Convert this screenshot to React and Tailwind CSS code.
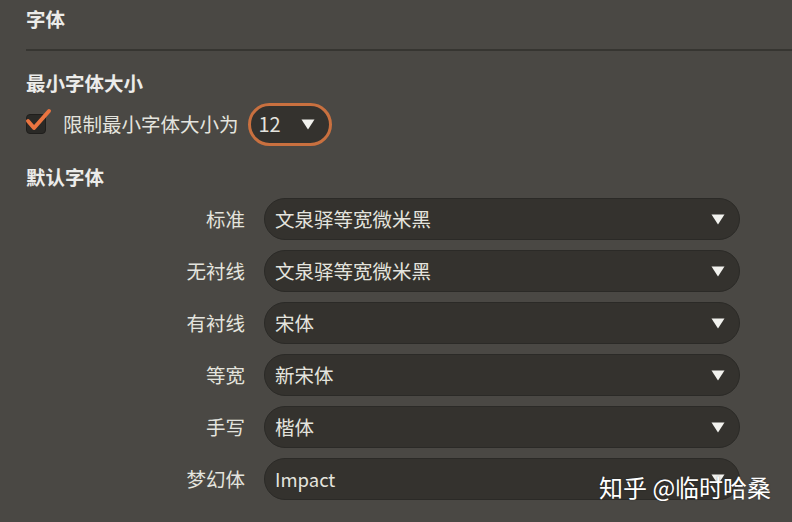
import React from "react";

const rows = [
  ["标准", "文泉驿等宽微米黑"],
  ["无衬线", "文泉驿等宽微米黑"],
  ["有衬线", "宋体"],
  ["等宽", "新宋体"],
  ["手写", "楷体"],
  ["梦幻体", "Impact"],
];

function Arrow() {
  return (
    <svg width="14" height="11" viewBox="0 0 14 11" className="shrink-0">
      <path d="M0.5 0.5 L13.5 0.5 L7 10.5 Z" fill="#f2f2ee" />
    </svg>
  );
}

export default function App() {
  const font = { fontFamily: '"Noto Sans CJK SC", "Noto Sans", sans-serif' };
  return (
    <div
      className="relative w-[792px] h-[522px] overflow-hidden bg-[#4a4844] text-[#e4e4de]"
      style={font}
    >
      <div className="pl-[26px] pt-[7px] text-[19.5px] leading-[24px] font-bold text-[#ececea]">字体</div>
      <div className="ml-[26px] mt-[18px] h-[2px] bg-[#363531]" />
      <div className="pl-[26px] mt-[20px] text-[19.5px] leading-[24px] font-bold text-[#ececea]">最小字体大小</div>
      <div className="pl-[26px] mt-[8px] h-[42px] flex items-center">
        <div className="relative w-[20px] h-[20px] rounded-[4px] bg-[#2a2926] border border-[#1f1e1c]">
          <svg width="28" height="26" viewBox="0 0 28 26" className="absolute left-[-2px] top-[-8px]">
            <path d="M3 14 L9 21 L24 4" fill="none" stroke="#ea7440" strokeWidth="4" strokeLinecap="round" strokeLinejoin="round" />
          </svg>
        </div>
        <span className="ml-[17px] text-[19.5px] leading-[24px]">限制最小字体大小为</span>
        <div className="ml-[9px] w-[84px] h-[43px] rounded-full border-[3px] border-[#c9703f] bg-[#34322e] flex items-center pl-[8px] pr-[14px] justify-between">
          <span className="text-[20px] leading-[24px]">12</span>
          <Arrow />
        </div>
      </div>
      <div className="pl-[26px] mt-[20px] text-[19.5px] leading-[24px] font-bold text-[#ececea]">默认字体</div>
      <div className="mt-[9px] flex flex-col gap-[10px]">
        {rows.map(([label, value]) => (
          <div key={label} className="flex items-center h-[42px]">
            <div className="w-[245px] text-right text-[19.5px] leading-[24px] pr-0">{label}</div>
            <div className="ml-[19px] w-[476px] h-[42px] rounded-full bg-[#34322e] border border-[#2b2a27] flex items-center justify-between pl-[10px] pr-[14px]">
              <span className={value === "Impact" ? "text-[18.5px] leading-[24px]" : "text-[19.5px] leading-[24px]"}>{value}</span>
              <Arrow />
            </div>
          </div>
        ))}
      </div>
      <div
        className="absolute left-[599px] top-[471px] text-[24px] leading-[32px] text-white whitespace-nowrap"
        style={{ textShadow: "0 0 2px rgba(0,0,0,0.4)" }}
      >
        知乎 @临时哈桑
      </div>
    </div>
  );
}
